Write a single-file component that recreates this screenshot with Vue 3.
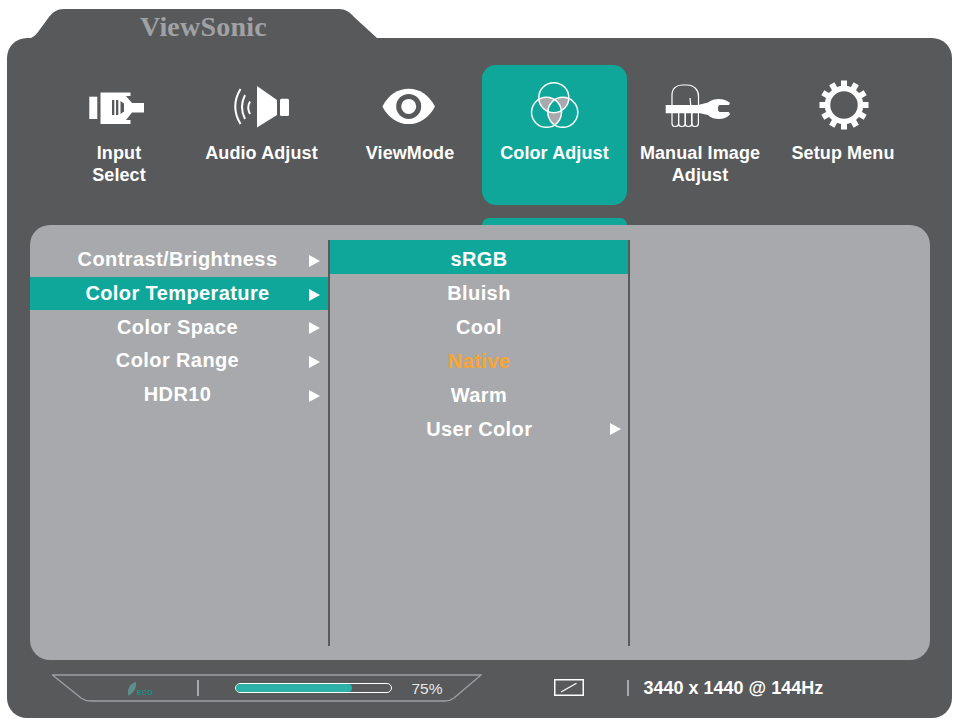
<template>
  <div class="osd">
    <div class="tab">
      <svg class="tab-shape" viewBox="0 0 400 30" width="400" height="30">
        <path d="M0 30 H22 C26 28 29 26 31 23 L42 8 C46 3 50 0 57 0 H332 C338 0 343 3 347 8 L370 29 H400 V30 Z" fill="#58595b" />
      </svg>
      <span class="brand">ViewSonic</span>
    </div>

    <div class="frame">
      <!-- top menu -->
      <div class="menu">
        <div
          v-for="item in menu"
          :key="item.id"
          class="tile"
          :class="{ active: item.id === 'color' }"
        >
          <svg v-if="item.id === 'input'" viewBox="0 0 100 64" width="100" height="64">
            <rect x="20.3" y="18.7" width="8" height="22.3" fill="#fff" />
            <path d="M31.5 14.5 H61.5 V18 H57 L63 25 H75 V34.5 H63 L57 42 H61.5 V46 H31.5 Z" fill="#fff" />
            <rect x="43" y="22" width="2.3" height="15" fill="#58595b" />
            <rect x="47" y="22" width="2.3" height="15" fill="#58595b" />
            <path d="M51.5 23 L55 25.5 V33.5 L51.5 36 Z" fill="#58595b" />
          </svg>
          <svg v-else-if="item.id === 'audio'" viewBox="0 0 100 64" width="100" height="64">
            <path d="M45 8 L65 22 V37 L45 49.5 Z" fill="#fff" />
            <rect x="68" y="20.7" width="9" height="17.3" rx="1.5" fill="#fff" />
            <g fill="none" stroke="#fff" stroke-width="2">
              <path d="M28.5 11 Q18 28.5 28.5 46" />
              <path d="M33 17 Q27 29 33 41" />
              <path d="M38 23.5 Q34.5 29.5 38 36" />
            </g>
          </svg>
          <svg v-else-if="item.id === 'view'" viewBox="0 0 100 64" width="100" height="64">
            <path d="M22.4 28.4 C28 17 38 10.7 48.7 10.7 C59.4 10.7 69 17 75 28.4 C69 39.8 59.4 46.1 48.7 46.1 C38 46.1 28 39.8 22.4 28.4 Z" fill="#fff" />
            <circle cx="48.7" cy="28.4" r="10" fill="#fff" stroke="#58595b" stroke-width="5" />
          </svg>
          <svg v-else-if="item.id === 'color'" viewBox="0 0 100 64" width="100" height="64">
            <defs>
              <clipPath id="c-top"><circle cx="48.8" cy="19.7" r="15" /></clipPath>
              <clipPath id="c-left"><circle cx="41.5" cy="34.3" r="15" /></clipPath>
              <clipPath id="c-right"><circle cx="57.8" cy="34.3" r="15" /></clipPath>
            </defs>
            <circle cx="57.8" cy="34.3" r="15" fill="#a7a9ac" clip-path="url(#c-top)" />
            <circle cx="41.5" cy="34.3" r="15" fill="#a7a9ac" clip-path="url(#c-top)" />
            <circle cx="41.5" cy="34.3" r="15" fill="#a7a9ac" clip-path="url(#c-right)" />
            <g clip-path="url(#c-top)">
              <circle cx="57.8" cy="34.3" r="15" fill="#10a79b" clip-path="url(#c-left)" />
            </g>
            <g fill="none" stroke="#fff" stroke-width="1.5">
              <circle cx="48.8" cy="19.7" r="15" />
              <circle cx="41.5" cy="34.3" r="15" />
              <circle cx="57.8" cy="34.3" r="15" />
            </g>
          </svg>
          <svg v-else-if="item.id === 'manual'" viewBox="0 0 100 64" width="100" height="64">
            <g fill="none" stroke="#fff" stroke-width="1.2">
              <path d="M22 27 V17 C22 10 27 7 32 7 H37 C44 7 48.5 12 48.5 18 V27" />
              <path d="M40 20 L40.7 27" />
              <rect x="22" y="32" width="6.6" height="16.5" rx="3" />
              <rect x="28.6" y="32" width="6.6" height="16.5" rx="3" />
              <rect x="35.2" y="32" width="6.6" height="16.5" rx="3" />
              <rect x="41.8" y="32" width="6.6" height="16.5" rx="3" />
            </g>
            <path d="M15.7 27 H48 L58 24.5 C61 22 65 21 69 21 C73 21 77 22.5 80 25 L79 27 H70 C68.5 27 68 28.5 68 30.5 C68 32.5 68.5 34 70 34 H79 L80 36.5 C77 39.5 73 41 69 41 C65 41 61 40 58 37 L50 35.3 H15.7 Z" fill="#fff" />
          </svg>
          <svg v-else viewBox="0 0 100 64" width="100" height="64">
            <circle cx="51" cy="27" r="16.5" fill="none" stroke="#fff" stroke-width="5.5" />
            <rect
              v-for="a in gearTeeth"
              :key="a"
              x="48"
              y="2.5"
              width="6"
              height="8"
              fill="#fff"
              :transform="`rotate(${a} 51 27)`"
            />
          </svg>
          <div class="tile-label">
            <span v-for="line in item.label" :key="line">{{ line }}</span>
          </div>
        </div>
      </div>

      <!-- next tile, mostly behind the panel -->
      <div class="peek"></div>

      <div class="panel">
        <div class="col-left">
          <div
            v-for="row in leftRows"
            :key="row"
            class="row left-row"
            :class="{ selected: row === 'Color Temperature' }"
          >
            <span class="row-text">{{ row }}</span>
            <i class="arrow"></i>
          </div>
        </div>
        <div class="col-mid">
          <div
            v-for="row in midRows"
            :key="row.name"
            class="row mid-row"
            :class="{ selected: row.name === 'sRGB', current: row.name === 'Native' }"
          >
            <span class="row-text">{{ row.name }}</span>
            <i v-if="row.sub" class="arrow"></i>
          </div>
        </div>
      </div>

      <!-- status bar -->
      <div class="status">
        <div class="gauge">
          <svg class="gauge-line" viewBox="0 0 430 28" width="430" height="28">
            <path d="M0.5 1 H429 L402 24 Q398 27 393 27 H38 Q33 27 29 24 Z" fill="none" stroke="#9d9fa2" stroke-width="1.4" />
          </svg>
          <div class="eco">
            <svg viewBox="0 0 10 15" width="10" height="15">
              <path d="M1.5 15 C-0.5 8 3 3 9 0.5 C10.5 6 7.5 12 1.5 15 Z" fill="#5f8f8d" />
            </svg>
            <span class="eco-text">ECO</span>
          </div>
          <div class="sep"></div>
          <div class="bar">
            <div class="bar-fill" :style="{ width: level + '%' }"></div>
          </div>
          <span class="level">{{ level }}%</span>
        </div>
        <svg class="monitor" viewBox="0 0 30 17" width="30" height="17">
          <rect x="0.75" y="0.75" width="28.5" height="15.5" fill="none" stroke="#fff" stroke-width="1.5" />
          <path d="M7 13 L22.5 4.2" stroke="#fff" stroke-width="1.3" />
        </svg>
        <div class="sep sep-res"></div>
        <span class="res">3440 x 1440 @ 144Hz</span>
      </div>
    </div>
  </div>
</template>

<script setup>
const level = 75;

const menu = [
  { id: "input", label: ["Input", "Select"] },
  { id: "audio", label: ["Audio Adjust"] },
  { id: "view", label: ["ViewMode"] },
  { id: "color", label: ["Color Adjust"] },
  { id: "manual", label: ["Manual Image", "Adjust"] },
  { id: "setup", label: ["Setup Menu"] }
];

const gearTeeth = [0, 30, 60, 90, 120, 150, 180, 210, 240, 270, 300, 330];

const leftRows = [
  "Contrast/Brightness",
  "Color Temperature",
  "Color Space",
  "Color Range",
  "HDR10"
];

const midRows = [
  { name: "sRGB" },
  { name: "Bluish" },
  { name: "Cool" },
  { name: "Native" },
  { name: "Warm" },
  { name: "User Color", sub: true }
];
</script>

<style>
html,
body {
  margin: 0;
  background: #fff;
}
</style>

<style scoped>
.osd {
  width: 945px;
  margin: 9px 0 0 7px;
  font-family: "Liberation Sans", Arial, sans-serif;
  color: #fff;
}

.tab {
  position: relative;
  height: 29px;
}
.tab-shape {
  display: block;
}
.brand {
  position: absolute;
  left: 133px;
  top: 3px;
  font-family: "Liberation Serif", serif;
  font-weight: 700;
  font-size: 28px;
  line-height: 30px;
  letter-spacing: 0.2px;
  color: #a0a2a5;
}

.frame {
  height: 680px;
  box-sizing: border-box;
  padding-top: 27px;
  background: #58595b;
  border-radius: 20px;
}

.menu {
  display: grid;
  grid-template-columns: 144px 141px 150px 145px 146px 140px;
  margin-left: 40px;
}
.tile {
  height: 140px;
  box-sizing: border-box;
  padding-top: 13px;
  display: flex;
  flex-direction: column;
  align-items: center;
  border-radius: 14px;
}
.tile:nth-child(3) {
  padding-left: 6px;
}
.tile.active {
  background: #10a79b;
}
.tile-label {
  display: flex;
  flex-direction: column;
  align-items: center;
  font-size: 18px;
  font-weight: 700;
  line-height: 22px;
  letter-spacing: 0.1px;
}

.peek {
  width: 145px;
  height: 7px;
  margin: 13px 0 0 475px;
  background: #10a79b;
  border-radius: 10px 10px 0 0;
}

.panel {
  height: 435px;
  margin: 0 22px 0 23px;
  display: flex;
  align-items: stretch;
  box-sizing: border-box;
  padding: 15px 0 14px;
  background: #a7a9ac;
  border-radius: 20px;
  font-size: 20px;
  font-weight: 700;
  letter-spacing: 0.4px;
}

.col-left {
  width: 298px;
  padding-top: 3px;
}
.col-mid {
  width: 302px;
  box-sizing: border-box;
  border-left: 2px solid #58595b;
  border-right: 2px solid #58595b;
}

.row {
  height: 33.7px;
  display: flex;
  align-items: center;
}
.row-text {
  flex: 1;
  text-align: center;
}
.left-row {
  padding: 0 8px 0 26px;
}
.mid-row {
  height: 34px;
  box-sizing: border-box;
  padding: 4px 7px 0 30px;
}
.mid-row .row-text {
  margin-right: 23px;
}
.mid-row .arrow {
  margin-left: -11.5px;
}
.selected {
  background: #10a79b;
}
.current {
  color: #f9a533;
}
.arrow {
  width: 0;
  height: 0;
  margin-left: 10px;
  border-left: 11.5px solid #fff;
  border-top: 6px solid transparent;
  border-bottom: 6px solid transparent;
}
.left-row .arrow {
  margin-top: 2px;
}

.status {
  display: flex;
  align-items: center;
  margin: 14px 0 0 45px;
  height: 28px;
}
.gauge {
  position: relative;
  width: 430px;
  height: 28px;
  display: flex;
  align-items: center;
}
.gauge-line {
  position: absolute;
  left: 0;
  top: 0;
}
.eco {
  display: flex;
  align-items: flex-end;
  width: 26px;
  margin-left: 75px;
  margin-top: 1px;
}
.eco-text {
  font-size: 7px;
  font-weight: 700;
  line-height: 7px;
  color: #1f8f87;
  letter-spacing: 0.4px;
}
.sep {
  width: 1.5px;
  height: 16px;
  margin-left: 44px;
  background: #a7a9ac;
}
.bar {
  width: 157px;
  height: 10px;
  margin-left: 36px;
  box-sizing: border-box;
  border: 1.5px solid #fff;
  border-radius: 6px;
  overflow: hidden;
}
.bar-fill {
  height: 100%;
  background: #2cb1a8;
  border-radius: 0 4px 4px 0;
}
.level {
  margin-left: 20px;
  padding-top: 1px;
  font-size: 15.5px;
  color: #e6e7e8;
}
.monitor {
  margin: 0 0 2px 72px;
}
.sep-res {
  margin-left: 43px;
}
.res {
  margin-left: 15px;
  font-size: 18px;
  font-weight: 700;
}
</style>
